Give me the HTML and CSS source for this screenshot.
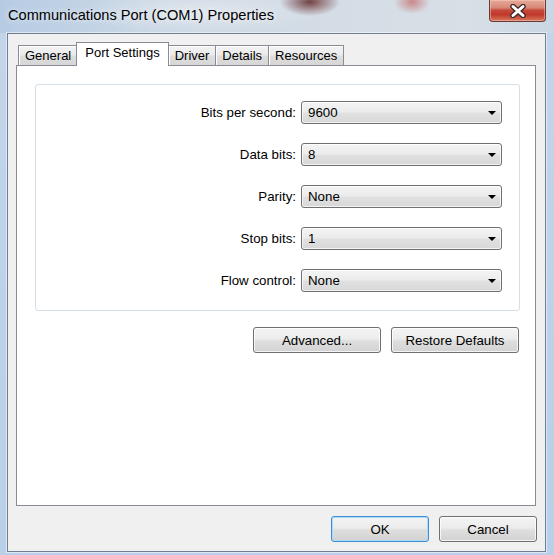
FILE: index.html
```html
<!DOCTYPE html>
<html lang="en">
<head>
    <meta charset="UTF-8" />
    <title>Communications Port (COM1) Properties</title>
    <link rel="stylesheet" href="styles.css">
</head>
<body>

    <!-- Window -->
    <div class="window">

        <!-- Title bar -->
        <div class="titlebar">
            <div class="title">Communications Port (COM1) Properties</div>
            <div class="close-btn">
                <svg width="18" height="14" viewBox="0 0 18 14">
                    <path d="M4 2.5 L14 11.5 M14 2.5 L4 11.5" stroke="#3b2a2a" stroke-width="5.5" stroke-linecap="round" fill="none"/>
                    <path d="M4 2.5 L14 11.5 M14 2.5 L4 11.5" stroke="#ffffff" stroke-width="3" stroke-linecap="round" fill="none"/>
                </svg>
            </div>
        </div>

        <!-- Dialog body -->
        <div class="client">
            <div class="tabs">
                <div class="tab">General</div>
                <div class="tab tab-active">Port Settings</div>
                <div class="tab">Driver</div>
                <div class="tab">Details</div>
                <div class="tab">Resources</div>
            </div>

            <div class="tab-panel">
                <div class="group">
                    <div class="field-label">Bits per second:</div>
                    <div class="combo"><span>9600</span><span class="combo-arrow"></span></div>

                    <div class="field-label">Data bits:</div>
                    <div class="combo"><span>8</span><span class="combo-arrow"></span></div>

                    <div class="field-label">Parity:</div>
                    <div class="combo"><span>None</span><span class="combo-arrow"></span></div>

                    <div class="field-label">Stop bits:</div>
                    <div class="combo"><span>1</span><span class="combo-arrow"></span></div>

                    <div class="field-label">Flow control:</div>
                    <div class="combo"><span>None</span><span class="combo-arrow"></span></div>
                </div>

                <div class="panel-actions">
                    <button class="btn btn-wide">Advanced...</button>
                    <button class="btn btn-wide">Restore Defaults</button>
                </div>
            </div>

            <!-- Dialog buttons -->
            <div class="dialog-actions">
                <button class="btn btn-default">OK</button>
                <button class="btn">Cancel</button>
            </div>
        </div>
    </div>

</body>
</html>
```

FILE: styles.css
```css
body {
    margin: 0;
    padding: 0;
    font-family: 'Liberation Sans', Arial, sans-serif;
    font-size: 13.3px;
    color: #000;
}

.window {
    width: 554px;
    height: 555px;
    display: flex;
    flex-direction: column;
    background: linear-gradient(to bottom, #c3d5e9, #b9d0e8);
    overflow: hidden;
}

/* Title bar */
.titlebar {
    height: 33px;
    flex: none;
    display: flex;
    justify-content: space-between;
    align-items: flex-start;
    background:
        radial-gradient(ellipse 30px 14px at 310px 2px, rgba(95, 40, 40, 0.85), transparent),
        radial-gradient(ellipse 12px 8px at 318px 6px, rgba(230, 225, 228, 0.9), transparent),
        radial-gradient(ellipse 18px 12px at 412px 2px, rgba(195, 100, 100, 0.7), transparent),
        radial-gradient(ellipse 120px 22px at 200px 12px, rgba(228, 232, 238, 0.85), transparent),
        linear-gradient(to right, #b6cbe3, #c9d7e6 25%, #d3dce5 55%, #d8dfe6 85%, #c9d6e4);
}

.title {
    padding: 7px 0 0 8px;
    font-size: 14.6px;
    line-height: 17px;
    color: #000;
    text-shadow: 0 0 6px rgba(255, 255, 255, 0.9);
}

.close-btn {
    width: 57px;
    height: 22px;
    margin-right: 8px;
    box-sizing: border-box;
    border: 1px solid #6a3a34;
    border-top: none;
    border-radius: 0 0 4px 4px;
    background: linear-gradient(to bottom, #e6a998 0%, #d88b7a 35%, #c5473a 50%, #c0392b 70%, #d6795e 100%);
    box-shadow: inset 0 0 0 1px rgba(255, 210, 200, 0.45);
    display: flex;
    align-items: center;
    justify-content: center;
}

/* Client area */
.client {
    flex: 1;
    margin: 0 8px 3px 7px;
    border: 1px solid #6f7f91;
    background-color: #f0f0f0;
    display: flex;
    flex-direction: column;
    padding: 8px 9px 0 8px;
    box-shadow: 0 0 0 1px rgba(255, 255, 255, 0.5);
}

/* Tabs */
.tabs {
    height: 23px;
    display: flex;
    align-items: flex-end;
    padding-left: 2px;
    flex: none;
    font-size: 13px;
}

.tab {
    height: 20px;
    box-sizing: border-box;
    padding: 0 6px;
    line-height: 19px;
    border: 1px solid #898c95;
    border-bottom: none;
    margin-left: -1px;
    background: linear-gradient(to bottom, #f3f3f3 0%, #ebebeb 45%, #dedede 55%, #d6d6d6 100%);
    box-shadow: inset 1px 1px 0 #ffffff;
    white-space: nowrap;
}

.tab:first-child {
    margin-left: 0;
}

.tab-active {
    height: 24px;
    margin: 0 -2px -1px -2px;
    padding: 0 8px 3px 8px;
    line-height: 20px;
    background: #ffffff;
    box-shadow: none;
    position: relative;
    z-index: 1;
}

.tab-active + .tab {
    margin-left: 1px;
}

.tab-panel {
    height: 441px;
    box-sizing: border-box;
    border: 1px solid #898c95;
    background-color: #ffffff;
    padding: 18px 15px 0 18px;
    flex: none;
}

/* Settings group */
.group {
    border: 1px solid #d5dfe5;
    border-radius: 3px;
    box-shadow: inset 1px 1px 0 #ffffff;
    display: grid;
    grid-template-columns: 1fr 201px;
    column-gap: 5px;
    row-gap: 19px;
    align-items: center;
    padding: 16px 17px 18px 17px;
}

.field-label {
    text-align: right;
    white-space: nowrap;
}

.combo {
    height: 23px;
    box-sizing: border-box;
    border: 1px solid #707070;
    border-radius: 3px;
    background: linear-gradient(to bottom, #f4f4f4 0%, #ececec 45%, #e0e0e0 55%, #d8d8d8 100%);
    box-shadow: inset 0 0 0 1px rgba(255, 255, 255, 0.7);
    display: flex;
    justify-content: space-between;
    align-items: center;
    padding: 0 5px 0 6px;
}

.combo-arrow {
    width: 0;
    height: 0;
    border-left: 4px solid transparent;
    border-right: 4px solid transparent;
    border-top: 4px solid #000;
    margin-top: 1px;
}

.panel-actions {
    display: flex;
    justify-content: flex-end;
    gap: 10px;
    margin-top: 16px;
    padding-right: 1px;
}

/* Buttons */
.btn {
    width: 98px;
    height: 26px;
    box-sizing: border-box;
    border: 1px solid #707070;
    border-radius: 3px;
    background: linear-gradient(to bottom, #f4f4f4 0%, #ececec 45%, #dedede 55%, #d2d2d2 100%);
    box-shadow: inset 0 0 0 1px rgba(255, 255, 255, 0.75);
    font-family: 'Liberation Sans', Arial, sans-serif;
    font-size: 13.3px;
    color: #000;
    padding: 0;
    cursor: pointer;
}

.btn-wide {
    width: 128px;
}

.btn-default {
    border-color: #3c8fd0;
    box-shadow: inset 0 0 0 1px #a9dcf7;
}

.dialog-actions {
    display: flex;
    justify-content: flex-end;
    gap: 10px;
    padding: 10px 0 0 0;
    margin-right: -1px;
}
```
